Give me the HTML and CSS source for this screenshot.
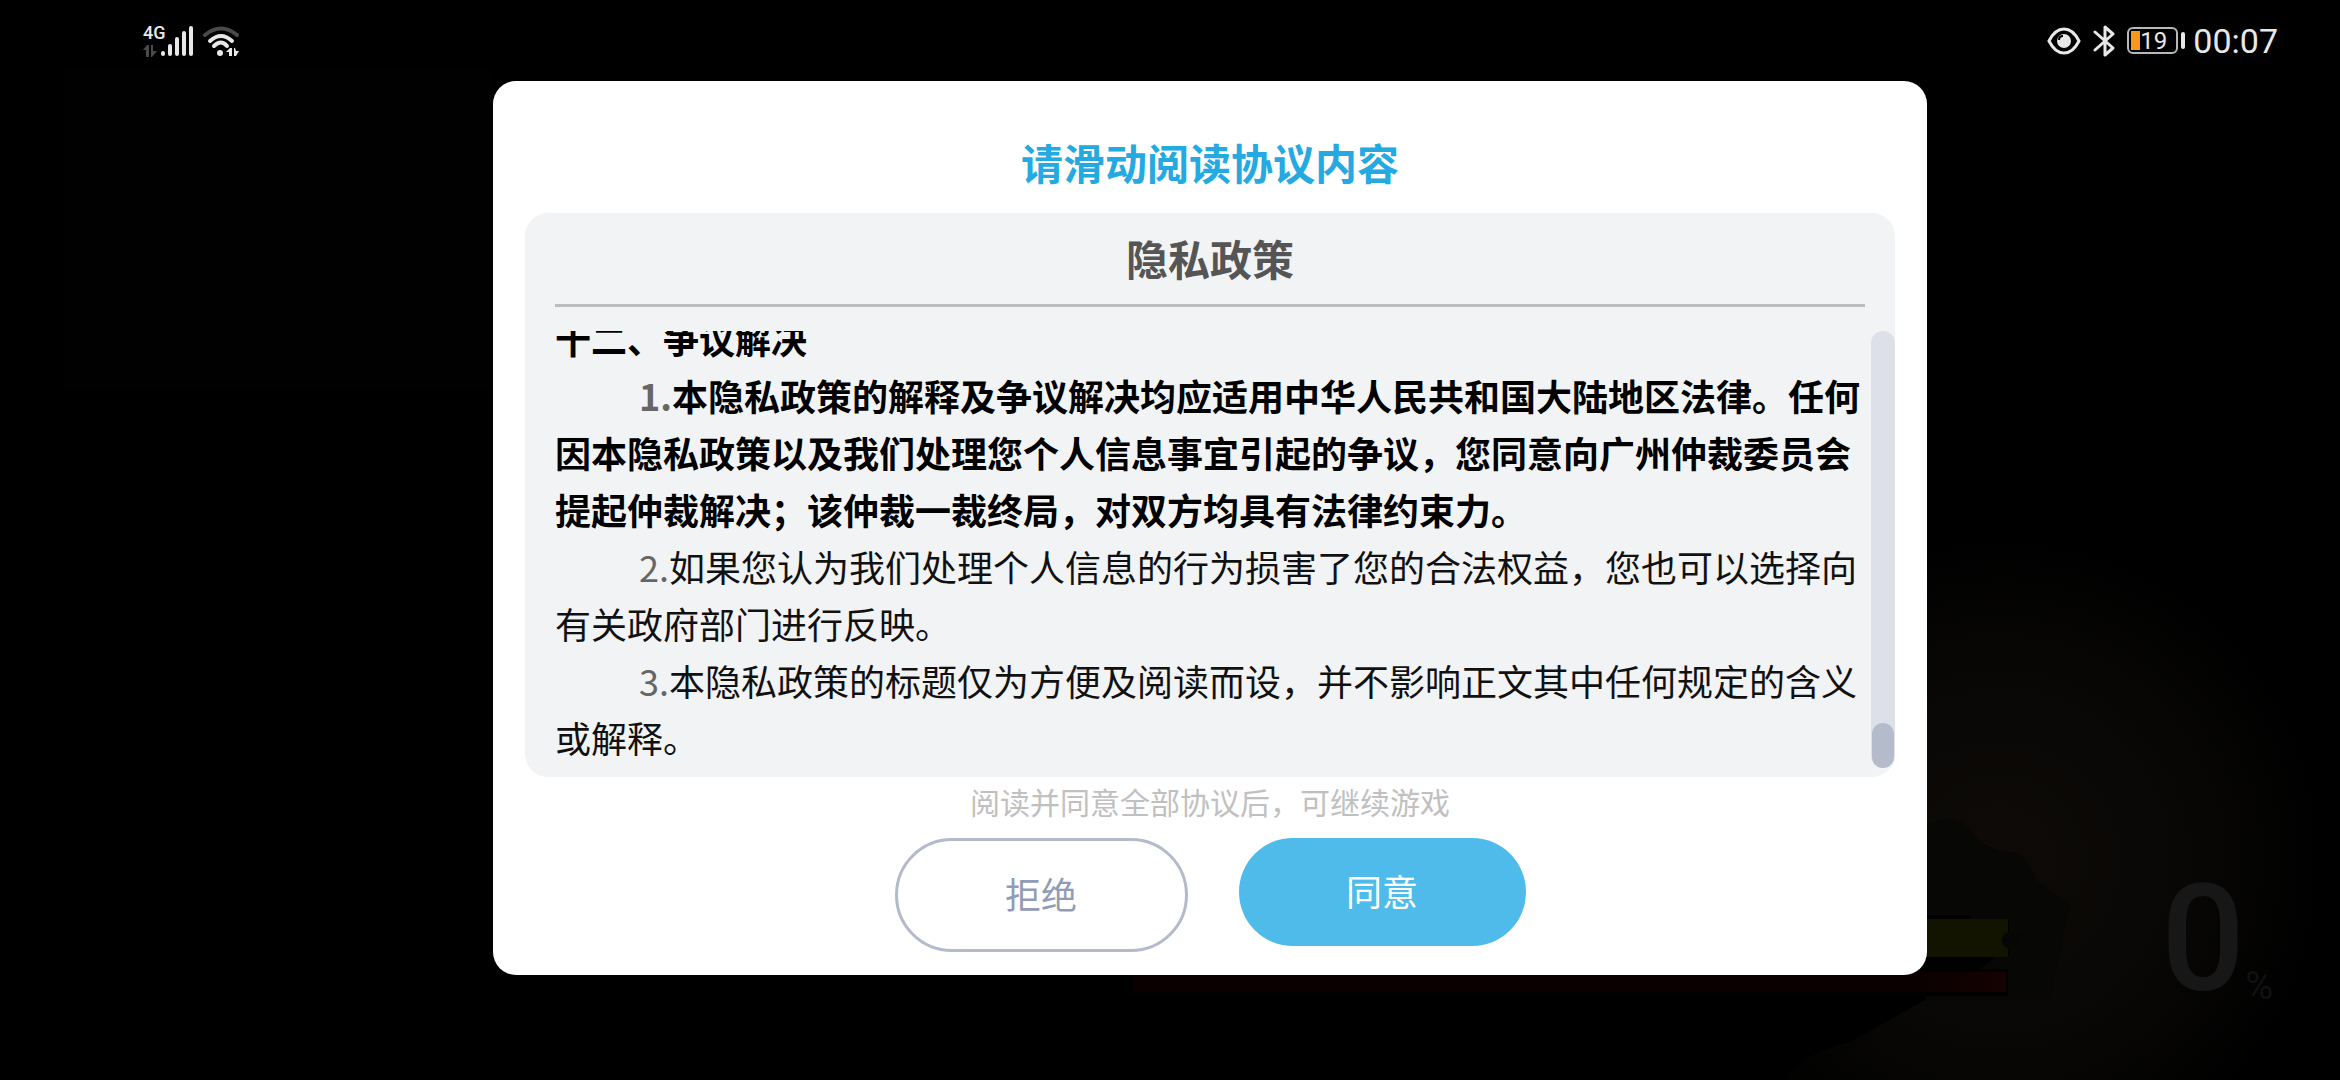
FILE: index.html
```html
<!DOCTYPE html>
<html lang="zh-CN">
<head>
    <meta charset="UTF-8">
    <meta name="viewport" content="width=device-width, initial-scale=1.0">
    <title>隐私政策</title>
    <link rel="stylesheet" href="styles.css">
</head>
<body>
    <!-- Escena de carga del juego, muy oscurecida -->
    <div class="scene">
        <svg class="scene-art" viewBox="0 0 2340 1080" preserveAspectRatio="xMidYMid slice" aria-hidden="true">
            <defs>
                <radialGradient id="glow" cx="2000" cy="860" r="330" gradientUnits="userSpaceOnUse">
                    <stop offset="0" stop-color="#0e0a07"/>
                    <stop offset="0.5" stop-color="#090806"/>
                    <stop offset="1" stop-color="#000000"/>
                </radialGradient>
                <linearGradient id="red" x1="1132" x2="2006" y1="0" y2="0" gradientUnits="userSpaceOnUse">
                    <stop offset="0" stop-color="#0a0000"/>
                    <stop offset="0.9" stop-color="#0b0000"/>
                    <stop offset="1" stop-color="#150202"/>
                </linearGradient>
            </defs>
            <path d="M64 70H493V390H64z" fill="#000100"/>
            <path d="M1780 1080Q1810 1050 1850 1042L1925 1000V200H2340V1080z" fill="url(#glow)"/>
            <path d="M1925 825Q1955 812 1970 830Q1985 852 2015 852Q2030 860 2036 880L2070 905L2050 1000H1925z" fill="#070706"/>
            <path d="M1900 915H1970L1972 919H2009V957H1995L1980 969H2008V996H1900z" fill="#010101"/>
            <path d="M1900 919H2008V957H1900z" fill="#131400"/>
            <path d="M2002 940Q2004 930 2012 934L2025 934L2012 950Q2002 948 2002 940z" fill="#060606"/>
            <path d="M1130 972H2008V996H1130z" fill="#010101"/>
            <path d="M1133 972H2006V992H1133z" fill="url(#red)"/>
        </svg>
        <div class="progress"><span class="progress-value">0</span><span class="progress-unit">%</span></div>
    </div>

    <header class="status-bar">
        <div class="status-left">
            <div class="network">
                <span>4G</span>
                <svg width="14" height="12" viewBox="0 0 14 12" fill="#4a4a4a" aria-hidden="true">
                    <path d="M4 0h2v12H3V5H0zM8 0h2v6h4l-5 6H8z"/>
                </svg>
            </div>
            <svg width="34" height="32" viewBox="0 0 34 32" stroke="#e8e8e8" stroke-width="4" stroke-linecap="round" aria-hidden="true">
                <path d="M3 28v1M10 21v8M17 14v15M24 8v21M31 3v26"/>
            </svg>
            <svg class="wifi" width="38" height="32" viewBox="0 0 38 32" fill="none" stroke-width="4" stroke-linecap="round" aria-hidden="true">
                <path d="M3 10Q19 -3 35 10" stroke="#4a4a4a"/>
                <path d="M8 16Q19 6 30 16M12 21Q19 14 25 21" stroke="#e8e8e8"/>
                <circle cx="18" cy="28" r="3" fill="#e8e8e8"/>
                <path d="M28 23h2v8h-3v-4h-3zM32 23h1l1 3h3l-3 5h-2z" fill="#e8e8e8"/>
            </svg>
        </div>
        <div class="status-right">
            <svg width="34" height="28" viewBox="0 0 34 28" fill="none" stroke="#e8e8e8" stroke-width="3" aria-hidden="true">
                <path d="M2 14Q8 2 17 2T32 14Q26 26 17 26T2 14z"/>
                <circle cx="17" cy="14" r="7" fill="#e8e8e8" stroke="none"/>
                <path d="M12 13q0-4 4-4" stroke="#000000" stroke-width="2"/>
            </svg>
            <svg width="22" height="32" viewBox="0 0 22 32" fill="none" stroke="#e8e8e8" stroke-width="3" stroke-linejoin="round" stroke-linecap="round" aria-hidden="true">
                <path d="M2 7L20 23L12 30V2L20 9L2 25"/>
            </svg>
            <div class="battery"><span class="battery-level"></span><span class="battery-text">19</span></div>
            <time class="clock">00:07</time>
        </div>
    </header>

    <main>
        <section class="dialog" role="dialog" aria-labelledby="dialogTitle">
            <h1 id="dialogTitle">请滑动阅读协议内容</h1>
            <div class="panel">
                <h2>隐私政策</h2>
                <div class="scroll-area">
                    <div class="policy">
                        <h3>十二、争议解决</h3>
                        <p class="strong"><span class="num">1.</span>本隐私政策的解释及争议解决均应适用中华人民共和国大陆地区法律。任何因本隐私政策以及我们处理您个人信息事宜引起的争议，您同意向广州仲裁委员会提起仲裁解决；该仲裁一裁终局，对双方均具有法律约束力。</p>
                        <p><span class="num">2.</span>如果您认为我们处理个人信息的行为损害了您的合法权益，您也可以选择向有关政府部门进行反映。</p>
                        <p><span class="num">3.</span>本隐私政策的标题仅为方便及阅读而设，并不影响正文其中任何规定的含义或解释。</p>
                    </div>
                    <div class="track"><div class="thumb"></div></div>
                </div>
            </div>
            <p class="hint">阅读并同意全部协议后，可继续游戏</p>
            <div class="actions">
                <button type="button" class="btn reject">拒绝</button>
                <button type="button" class="btn agree">同意</button>
            </div>
        </section>
    </main>
</body>
</html>
```
FILE: styles.css
```css
body {
    margin: 0;
    min-height: 100vh;
    position: relative;
    background-color: #000000;
    font-family: "Noto Sans CJK SC", sans-serif;
}

h1, h2, h3, p {
    margin: 0;
}

/* Fondo */
.scene {
    position: absolute;
    inset: 0;
    overflow: hidden;
    display: flex;
    justify-content: flex-end;
    align-items: flex-end;
}

.scene-art {
    position: absolute;
    inset: 0;
    width: 100%;
    height: 100%;
}

.progress {
    position: relative;
    display: flex;
    align-items: flex-end;
    padding: 0 67px 66px 0;
    font-family: Roboto, sans-serif;
}

.progress-value {
    font-size: 148px;
    font-weight: 500;
    line-height: 148px;
    color: #171717;
}

.progress-unit {
    font-size: 38px;
    line-height: 56px;
    color: #111111;
}

/* Barra de estado */
.status-bar {
    position: relative;
    display: flex;
    justify-content: space-between;
    align-items: center;
    height: 81px;
    padding: 0 62px 0 143px;
    color: #e8e8e8;
    font-family: Roboto, sans-serif;
}

.status-left,
.status-right {
    display: flex;
    align-items: center;
}

.network {
    display: flex;
    flex-direction: column;
    gap: 4px;
    width: 17px;
    font-size: 18px;
    font-weight: 500;
    line-height: 16px;
}

.wifi {
    margin-left: 8px;
}

.status-right {
    gap: 12px;
}

.battery {
    position: relative;
    display: flex;
    align-items: center;
    box-sizing: border-box;
    width: 51px;
    height: 27px;
    padding: 2px;
    border: 2px solid #b8b8b8;
    border-radius: 6px;
}

.battery::after {
    content: "";
    position: absolute;
    right: -9px;
    top: 3px;
    width: 4px;
    height: 17px;
    border-radius: 2px;
    background-color: #e8e8e8;
}

.battery-level {
    width: 9px;
    height: 19px;
    background-color: #f7981d;
}

.battery-text {
    font-size: 24px;
    line-height: 24px;
}

.clock {
    margin-left: 3px;
    font-size: 34px;
    line-height: 40px;
}

/* Dialogo */
main {
    position: relative;
    display: flex;
    justify-content: center;
    padding-left: 80px;
}

.dialog {
    box-sizing: border-box;
    width: 92%;
    max-width: 1434px;
    padding: 52px 32px 23px;
    border-radius: 23px;
    background-color: #ffffff;
}

h1, h2 {
    font-size: 42px;
    line-height: 58px;
    text-align: center;
}

h1 {
    margin-bottom: 22px;
    color: #24a9e1;
}

.panel {
    padding: 16px 0 9px 30px;
    border-radius: 23px;
    background-color: #f2f3f5;
}

.panel h2 {
    margin-right: 30px;
    padding-bottom: 17px;
    border-bottom: 3px solid #bbbdbf;
    color: #555555;
}

.scroll-area {
    display: flex;
    gap: 6px;
    height: 437px;
    margin-top: 24px;
}

.policy {
    flex: 1;
    display: flex;
    flex-direction: column;
    justify-content: flex-end;
    overflow: hidden;
    padding-bottom: 2px;
    font-size: 36px;
    line-height: 57px;
    color: #111111;
}

.policy h3 {
    font-size: 36px;
    color: #000000;
}

.policy p {
    text-indent: 84px;
}

.policy .strong {
    font-weight: bold;
    color: #000000;
}

.policy .num {
    color: #666666;
}

.track {
    display: flex;
    align-items: flex-end;
    width: 24px;
    border-radius: 12px;
    background-color: #dde0e9;
}

.thumb {
    width: 22px;
    height: 45px;
    margin: 0 auto;
    border-radius: 12px;
    background-color: #b4bccb;
}

.hint {
    margin: 2px 0 15px;
    font-size: 30px;
    line-height: 44px;
    text-align: center;
    color: #c0c0c0;
}

.actions {
    display: flex;
    justify-content: center;
    align-items: flex-start;
    gap: 51px;
}

.btn {
    box-sizing: content-box;
    width: 287px;
    height: 104px;
    padding: 0 0 4px;
    border: none;
    border-radius: 57px;
    font-family: inherit;
    font-size: 36px;
    cursor: pointer;
}

.reject {
    border: 3px solid #b4bacb;
    background-color: #ffffff;
    color: #929cb6;
}

.agree {
    background-color: #4fbbea;
    color: #ffffff;
}
```
